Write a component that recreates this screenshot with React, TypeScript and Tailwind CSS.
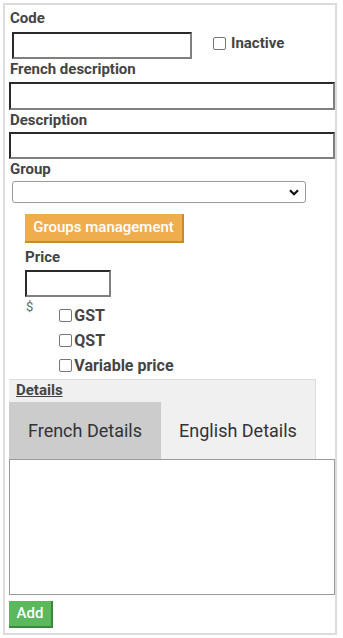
import React from "react"

// labels used on the product form
const Label: React.FC<{ text: string; className?: string }> = ({ text, className }) => (
    <div className={`text-[15px] leading-[17px] font-bold text-[#444] ${className ?? ""}`}>{text}</div>
)

// small checkbox drawn like the native one
const Box: React.FC = () => (
    <span className="inline-block h-[13px] w-[13px] rounded-[2px] border border-[#767676] bg-white shrink-0" />
)

const inputCls =
    "block h-[27px] bg-white border-2 border-t-[#2a2a2a] border-l-[#2a2a2a] border-b-[#808080] border-r-[#808080]"

export default function App() {
    return (
        <div className="font-['Roboto',sans-serif] bg-white h-[638px] pt-[3px] pl-[3px]">
            <div className="w-[334px] h-[632px] border-2 border-[#dcdcdc] pl-[4px] pt-[5px]">
                {/* code */}
                <Label text="Code" className="ml-[1px]" />
                <div className="flex items-center mt-[5px]">
                    <div className={`${inputCls} w-[180px] ml-[3px]`} />
                    <div className="flex items-center ml-[21px] mt-[-4px]">
                        <Box />
                        <span className="ml-[5px] text-[15px] leading-[17px] font-bold text-[#444]">Inactive</span>
                    </div>
                </div>

                {/* french description */}
                <Label text="French description" className="mt-[2px] ml-[1px]" />
                <div className={`${inputCls} w-[326px] h-[28px] mt-[4px]`} />

                {/* description */}
                <Label text="Description" className="mt-[2px] ml-[1px]" />
                <div className={`${inputCls} w-[326px] mt-[3px]`} />

                {/* group */}
                <Label text="Group" className="mt-[2px] ml-[1px]" />
                <div className="flex items-center justify-end w-[294px] h-[22px] ml-[3px] mt-[3px] rounded-[3px] border border-[#9a9a9a] bg-white pr-[6px]">
                    <svg width="10" height="7" viewBox="0 0 10 7">
                        <path d="M1 1.2 L5 5.2 L9 1.2" fill="none" stroke="#111" strokeWidth="2.2" />
                    </svg>
                </div>

                <button className="block ml-[16px] mt-[11px] h-[29px] w-[159px] bg-[#f0ad4e] border-b-2 border-r-2 border-[#c88a34] text-white text-[15px] font-medium leading-[27px] px-[4px] whitespace-nowrap">
                    Groups management
                </button>

                {/* price */}
                <Label text="Price" className="mt-[6px] ml-[16px]" />
                <div className={`${inputCls} w-[86px] ml-[16px] mt-[4px]`} />
                <div className="flex">
                    <span className="ml-[17px] mt-[3px] text-[13px] leading-[14px] text-[#666]">$</span>
                    <div className="flex flex-col ml-[26px] mt-[11px]">
                        {["GST", "QST", "Variable price"].map((t, i) => (
                            <div key={t} className={`flex items-center h-[14px] ${i > 0 ? "mt-[11px]" : ""}`}>
                                <Box />
                                <span className="ml-[2px] text-[16px] leading-[17px] font-bold text-[#444]">{t}</span>
                            </div>
                        ))}
                    </div>
                </div>

                {/* details */}
                <div className="w-[307px] mt-[7px] bg-[#f0f0f0] border-t border-r border-[#dcdcdc]">
                    <div className="pl-[7px] pt-[2px] h-[22px] text-[15px] leading-[17px] font-bold text-[#444] underline">
                        Details
                    </div>
                    <div className="flex h-[57px]">
                        <div className="w-[152px] bg-[#cccccc] flex items-center justify-center text-[18px] text-[#333] whitespace-nowrap">
                            French Details
                        </div>
                        <div className="flex-1 flex items-center justify-center text-[18px] text-[#333] whitespace-nowrap">
                            English Details
                        </div>
                    </div>
                </div>
                <div className="w-[326px] h-[136px] border border-[#9a9a9a] bg-white" />

                <button className="block mt-[6px] h-[27px] w-[44px] bg-[#5cb85c] border-b-2 border-r-2 border-[#3b8a3b] text-white text-[15px] font-medium leading-[25px]">
                    Add
                </button>
            </div>
        </div>
    )
}
